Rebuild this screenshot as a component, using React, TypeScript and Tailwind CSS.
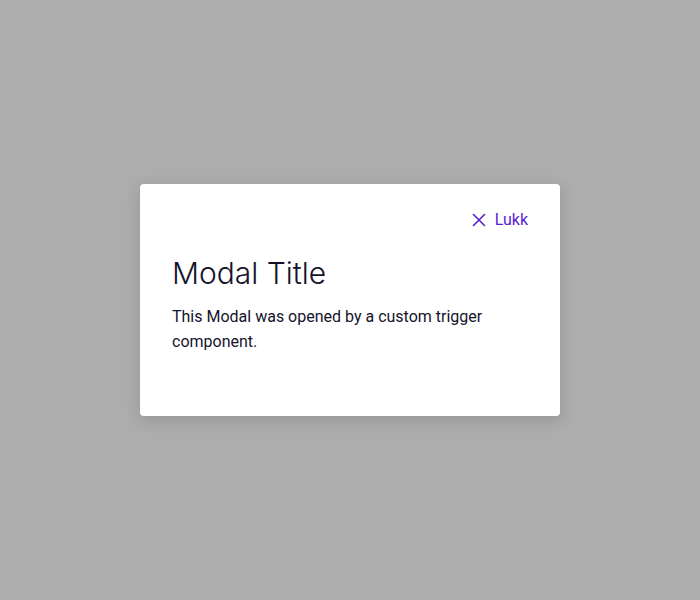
export default function App() {
  return (
    <div className="w-[700px] h-[600px] bg-[#adadad] flex items-center justify-center" style={{ fontFamily: "Roboto, sans-serif" }}>
      <div className="w-[420px] h-[232px] bg-white rounded-[4px] shadow-[0_4px_16px_rgba(0,0,0,0.15)] px-8 pt-[25px] flex flex-col">
        <div className="flex justify-end">
          <button className="flex items-center gap-[9px] text-[#5a1ecc] text-[16px] leading-[22px] h-[22px]">
            <svg width="14" height="14" viewBox="0 0 14 14" fill="none" stroke="currentColor" strokeWidth="1.6" strokeLinecap="round">
              <path d="M1.5 1.5L12.5 12.5M12.5 1.5L1.5 12.5" />
            </svg>
            <span>Lukk</span>
          </button>
        </div>
        <h1 className="mt-[22px] text-[30px] leading-[40px] font-light text-[#15132b]" style={{ fontFamily: "Inter, sans-serif" }}>Modal Title</h1>
        <p className="mt-[11px] text-[16px] leading-[25px] text-[#15132b]">
          This Modal was opened by a custom trigger component.
        </p>
      </div>
    </div>
  );
}
